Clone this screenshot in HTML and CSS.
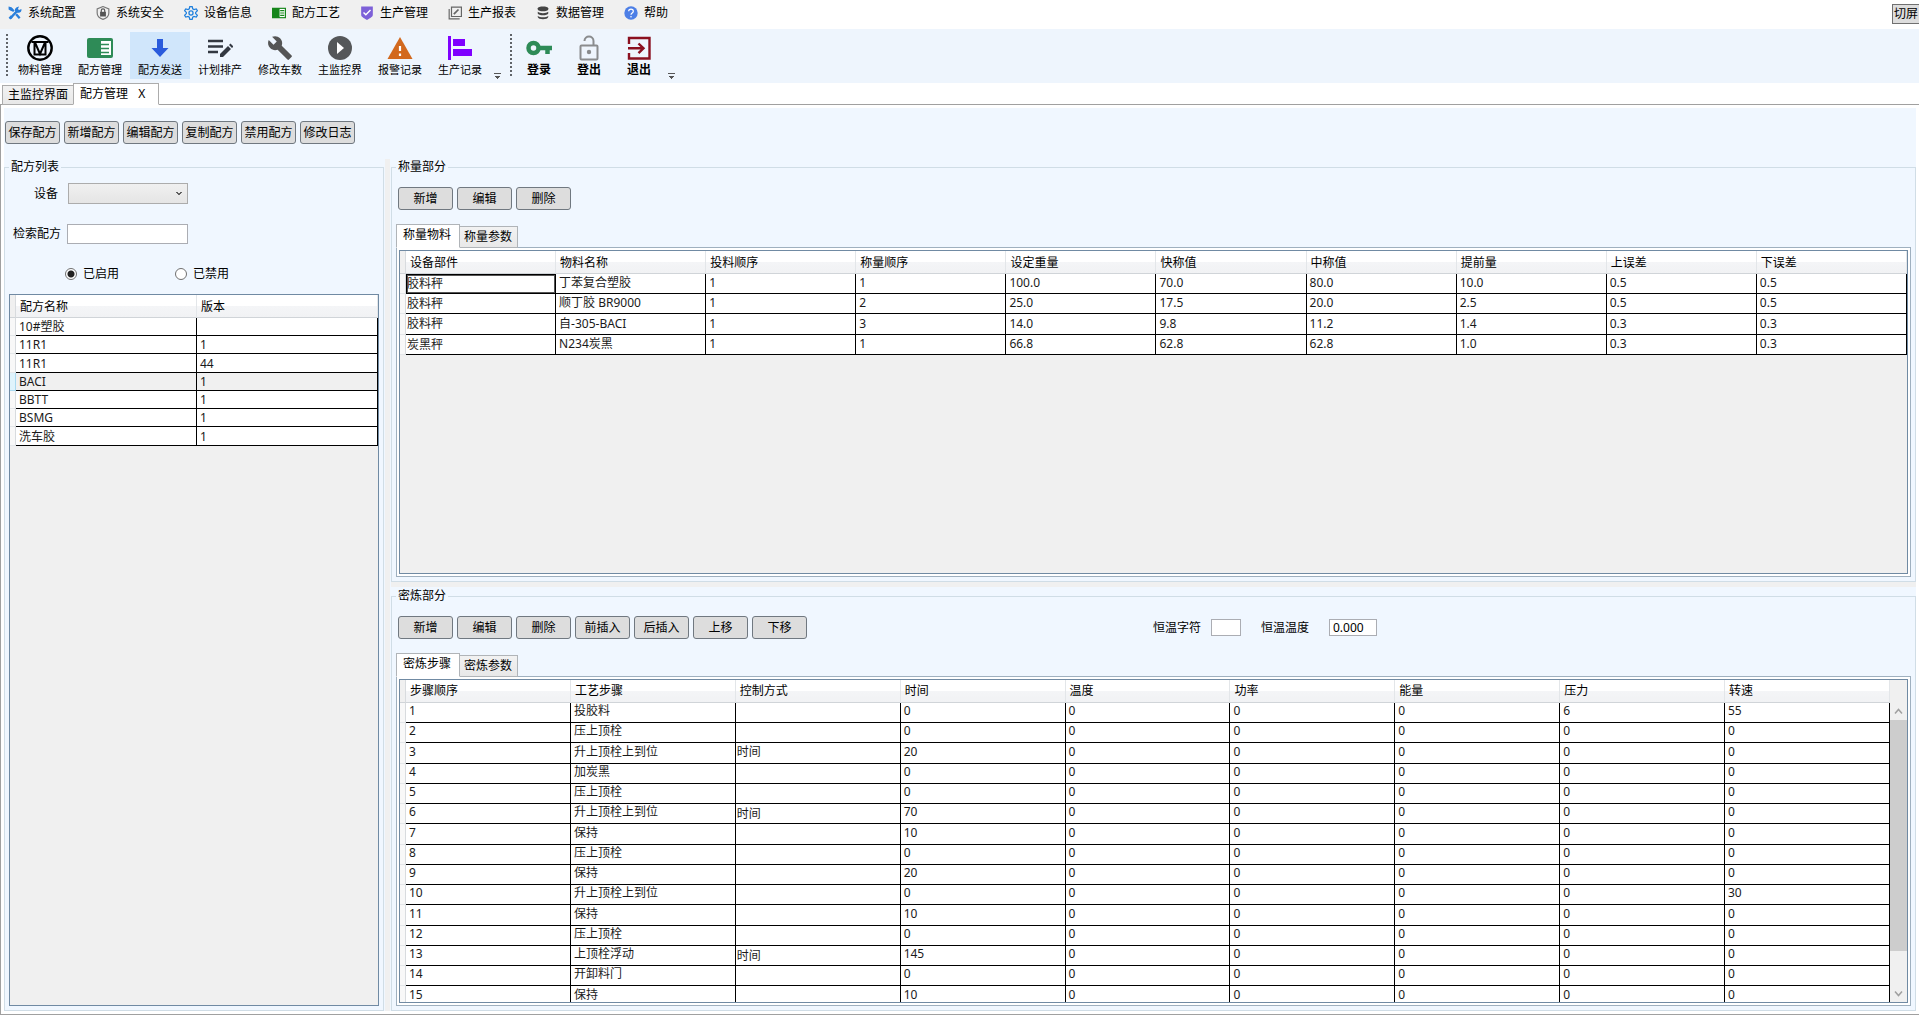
FILE: index.html
```html
<!DOCTYPE html>
<html lang="zh-CN">
<head>
<meta charset="utf-8">
<title>配方管理</title>
<link rel="stylesheet" href="styles.css">
</head>
<body>
<header class="menubar">
  <nav class="menu">
    <a href="#"><svg viewBox="0 0 24 24"><path d="M4 21L17 7M5 4l5 5M14 14l6 7" fill="none" stroke="#2a7fdb" stroke-width="4"/><path d="M1 1l5 1 3 5-3 2-5-3zM15 2l4-1-2 4 2 2 4-2c1 5-3 8-8 6l-3-3c-1-2 1-5 3-6zM1 20l3 3 4-3-3-4z" fill="#2a7fdb"/></svg>系统配置</a>
    <a href="#"><svg viewBox="0 0 24 24"><path d="M12 1L2 5v7c0 5 4 9 10 11 6-2 10-6 10-11V5z" fill="none" stroke="#777" stroke-width="2"/><path d="M7 10h10v8H7z" fill="#555"/><path d="M9 11V8c0-4 6-4 6 0v3" fill="none" stroke="#555" stroke-width="2"/></svg>系统安全</a>
    <a href="#"><svg viewBox="0 0 24 24" fill="none" stroke="#2080dd" stroke-width="2.2"><path d="M10 1h4l1 4 2 1 4-1 2 3-3 3v2l3 3-2 3-4-1-2 1-1 4h-4l-1-4-2-1-4 1-2-3 3-3v-2L1 8l2-3 4 1 2-1z"/><circle cx="12" cy="12" r="3.5"/></svg>设备信息</a>
    <a href="#"><svg viewBox="0 0 24 24"><path d="M0 3h24v18H0z" fill="#16861b"/><path d="M13 5h9v14h-9z" fill="#fff"/><path d="M14 8h7M14 12h7M14 16h7" stroke="#16861b" stroke-width="2"/></svg>配方工艺</a>
    <a href="#"><svg viewBox="0 0 24 24"><path d="M2 1h20v14c0 4-4 5-10 9C6 20 2 19 2 15z" fill="#7d60d8"/><path d="M6 11l4 4 8-8" fill="none" stroke="#fff" stroke-width="2.4"/></svg>生产管理</a>
    <a href="#"><svg viewBox="0 0 24 24" fill="none" stroke="#666" stroke-width="2"><path d="M6 2h17v16H6zM2 5v17h18"/><path d="M10 14l8-8" stroke-width="3"/></svg>生产报表</a>
    <a href="#"><svg viewBox="0 0 24 24" fill="#444"><path d="M3 4c0-4 18-4 18 0v2c0 4-18 4-18 0z"/><path d="M3 10c3 3 15 3 18 0v3c-1 4-17 4-18 0zM3 17c3 3 15 3 18 0v2c-1 5-17 5-18 0z"/></svg>数据管理</a>
    <a href="#"><svg viewBox="0 0 24 24"><circle cx="12" cy="12" r="11.5" fill="#4d7fe6"/><path d="M8 9c0-5 8-5 8 0 0 3-4 3-4 6" fill="none" stroke="#fff" stroke-width="2"/><circle cx="12" cy="18.5" r="1.4" fill="#fff"/></svg>帮助</a>
  </nav>
  <button class="switch-screen">切屏</button>
</header>

<div class="toolbar">
  <span class="grip"></span>
  <div class="tools">
    <button><svg viewBox="0 0 26 26" fill="none" stroke="#000"><circle cx="13" cy="13" r="11.7" stroke-width="2.4"/><path d="M4.500 7h17M7.500 7v12.500h11V7M8 7.500l5 11.500 5-11.500" stroke-width="2"/></svg>物料管理</button>
    <button><svg viewBox="0 0 26 26"><rect y="3" width="26" height="20" rx="2" fill="#2e8b57"/><path d="M14 6h10v14H14z" fill="#fff"/><path d="M14 9.500h8M14 13.500h8M14 17.500h8" stroke="#2e8b57" stroke-width="1.600"/></svg>配方管理</button>
    <button class="active"><svg viewBox="0 0 26 26"><path d="M10 4h6v9h5.500L13 22 4.500 13H10z" fill="#2a5bdc"/></svg>配方发送</button>
    <button><svg viewBox="0 0 26 26"><path d="M1 6h15M1 11.500h15M1 17h10" stroke="#333841" stroke-width="2.400"/><path d="M13 22v-3l8-8 3 3-8 8zM22 10l1.500-1.500 3 3L25 13z" fill="#333841"/></svg>计划排产</button>
    <button><svg viewBox="0 0 24 24"><path d="M22.700 19l-9.100-9.100c.9-2.300.4-5-1.500-6.900-2-2-5-2.400-7.400-1.300L9 6 6 9 1.600 4.700C.4 7.100.9 10.100 2.900 12.100c1.900 1.900 4.600 2.400 6.900 1.500l9.100 9.100c.4.400 1 .4 1.400 0l2.300-2.300c.5-.4.500-1.100.1-1.400z" fill="#555"/></svg>修改车数</button>
    <button><svg viewBox="0 0 26 26"><circle cx="13" cy="13" r="12" fill="#555759"/><path d="M10 7v12l7-6z" fill="#fff"/></svg>主监控界</button>
    <button><svg viewBox="0 0 26 26"><path d="M13 2l12.500 22H.500z" fill="#d2691e"/><path d="M13 11v5M13 18.500v2.500" stroke="#fff" stroke-width="2.200"/></svg>报警记录</button>
    <button><svg viewBox="0 0 26 26" fill="#7f00ff"><path d="M1 1h3v24H1zM6 4h12v7H6zM6 14h19v7H6z"/></svg>生产记录</button>
  </div>
  <span class="overflow"></span>
  <span class="grip"></span>
  <div class="tools account">
    <button><svg viewBox="0 0 26 26" fill="none" stroke="#2e8b57"><circle cx="7.500" cy="13" r="5" stroke-width="4.500"/><path d="M13 13h13M21.500 13v6" stroke-width="4.500"/></svg>登录</button>
    <button><svg viewBox="0 0 26 26" fill="none" stroke="#8a8c8e" stroke-width="2"><rect x="4.500" y="10.500" width="17" height="14" rx="1"/><path d="M8.500 6c0-6 9-6 9 0v4.500"/><circle cx="13" cy="17" r="1.200" fill="#666"/></svg>登出</button>
    <button><svg viewBox="0 0 26 26" fill="none" stroke="#8b1020" stroke-width="2.400"><path d="M3 9V3h20.500v20.500H3V18M2 13.300h15M12.500 8.500l5 4.800-5 4.800"/></svg>退出</button>
  </div>
  <span class="overflow"></span>
</div>

<div class="page-tabs">
  <button>主监控界面</button>
  <button class="active">配方管理 <span class="close">X</span></button>
</div>

<main class="page">
  <div class="surface">
    <div class="actions">
      <button>保存配方</button><button>新增配方</button><button>编辑配方</button><button>复制配方</button><button>禁用配方</button><button>修改日志</button>
    </div>
    <div class="workspace">
      <fieldset class="group">
        <legend>配方列表</legend>
        <div class="field field-device"><label for="device">设备</label><select id="device"><option></option></select></div>
        <div class="field field-search"><label for="search">检索配方</label><input id="search" type="text"></div>
        <div class="radios">
          <label><input type="radio" name="state" checked>已启用</label>
          <label><input type="radio" name="state">已禁用</label>
        </div>
        <div class="grid recipes">
          <table>
            <thead><tr><th class="mark"></th><th>配方名称</th><th>版本</th></tr></thead>
            <tbody>
              <tr><td class="mark"></td><td>10#塑胶</td><td></td></tr>
              <tr><td class="mark"></td><td>11R1</td><td>1</td></tr>
              <tr><td class="mark"></td><td>11R1</td><td>44</td></tr>
              <tr class="selected"><td class="mark"></td><td>BACI</td><td>1</td></tr>
              <tr><td class="mark"></td><td>BBTT</td><td>1</td></tr>
              <tr><td class="mark"></td><td>BSMG</td><td>1</td></tr>
              <tr><td class="mark"></td><td>洗车胶</td><td>1</td></tr>
            </tbody>
          </table>
        </div>
      </fieldset>
      <div class="splitter-v"></div>
      <div class="details">
        <fieldset class="group">
          <legend>称量部分</legend>
          <div class="row-actions"><button>新增</button><button>编辑</button><button>删除</button></div>
          <div class="sub-tabs"><button class="active">称量物料</button><button>称量参数</button></div>
          <div class="tab-panel">
            <div class="grid">
              <table>
                <thead><tr><th class="mark"></th><th>设备部件</th><th>物料名称</th><th>投料顺序</th><th>称量顺序</th><th>设定重量</th><th>快称值</th><th>中称值</th><th>提前量</th><th>上误差</th><th>下误差</th></tr></thead>
                <tbody>
                  <tr><td class="mark"></td><td class="choice focused">胶料秤</td><td>丁苯复合塑胶</td><td>1</td><td>1</td><td>100.0</td><td>70.0</td><td>80.0</td><td>10.0</td><td>0.5</td><td>0.5</td></tr>
                  <tr><td class="mark"></td><td class="choice">胶料秤</td><td>顺丁胶 BR9000</td><td>1</td><td>2</td><td>25.0</td><td>17.5</td><td>20.0</td><td>2.5</td><td>0.5</td><td>0.5</td></tr>
                  <tr><td class="mark"></td><td class="choice">胶料秤</td><td>自-305-BACI</td><td>1</td><td>3</td><td>14.0</td><td>9.8</td><td>11.2</td><td>1.4</td><td>0.3</td><td>0.3</td></tr>
                  <tr><td class="mark"></td><td class="choice">炭黑秤</td><td>N234炭黑</td><td>1</td><td>1</td><td>66.8</td><td>62.8</td><td>62.8</td><td>1.0</td><td>0.3</td><td>0.3</td></tr>
                </tbody>
              </table>
            </div>
          </div>
        </fieldset>
        <div class="splitter-h"></div>
        <fieldset class="group">
          <legend>密炼部分</legend>
          <div class="row-actions">
            <button>新增</button><button>编辑</button><button>删除</button><button>前插入</button><button>后插入</button><button>上移</button><button>下移</button>
            <div class="thermo">
              <label for="tchar">恒温字符</label><input id="tchar" class="t-char" type="text">
              <label for="ttemp">恒温温度</label><input id="ttemp" class="t-temp" type="text" value="0.000">
            </div>
          </div>
          <div class="sub-tabs"><button class="active">密炼步骤</button><button>密炼参数</button></div>
          <div class="tab-panel">
            <div class="grid scrolling">
              <table>
                <thead><tr><th class="mark"></th><th>步骤顺序</th><th>工艺步骤</th><th>控制方式</th><th>时间</th><th>温度</th><th>功率</th><th>能量</th><th>压力</th><th>转速</th></tr></thead>
                <tbody>
                  <tr><td class="mark"></td><td>1</td><td>投胶料</td><td class="choice"></td><td>0</td><td>0</td><td>0</td><td>0</td><td>6</td><td>55</td></tr>
                  <tr><td class="mark"></td><td>2</td><td>压上顶栓</td><td class="choice"></td><td>0</td><td>0</td><td>0</td><td>0</td><td>0</td><td>0</td></tr>
                  <tr><td class="mark"></td><td>3</td><td>升上顶栓上到位</td><td class="choice">时间</td><td>20</td><td>0</td><td>0</td><td>0</td><td>0</td><td>0</td></tr>
                  <tr><td class="mark"></td><td>4</td><td>加炭黑</td><td class="choice"></td><td>0</td><td>0</td><td>0</td><td>0</td><td>0</td><td>0</td></tr>
                  <tr><td class="mark"></td><td>5</td><td>压上顶栓</td><td class="choice"></td><td>0</td><td>0</td><td>0</td><td>0</td><td>0</td><td>0</td></tr>
                  <tr><td class="mark"></td><td>6</td><td>升上顶栓上到位</td><td class="choice">时间</td><td>70</td><td>0</td><td>0</td><td>0</td><td>0</td><td>0</td></tr>
                  <tr><td class="mark"></td><td>7</td><td>保持</td><td class="choice"></td><td>10</td><td>0</td><td>0</td><td>0</td><td>0</td><td>0</td></tr>
                  <tr><td class="mark"></td><td>8</td><td>压上顶栓</td><td class="choice"></td><td>0</td><td>0</td><td>0</td><td>0</td><td>0</td><td>0</td></tr>
                  <tr><td class="mark"></td><td>9</td><td>保持</td><td class="choice"></td><td>20</td><td>0</td><td>0</td><td>0</td><td>0</td><td>0</td></tr>
                  <tr><td class="mark"></td><td>10</td><td>升上顶栓上到位</td><td class="choice"></td><td>0</td><td>0</td><td>0</td><td>0</td><td>0</td><td>30</td></tr>
                  <tr><td class="mark"></td><td>11</td><td>保持</td><td class="choice"></td><td>10</td><td>0</td><td>0</td><td>0</td><td>0</td><td>0</td></tr>
                  <tr><td class="mark"></td><td>12</td><td>压上顶栓</td><td class="choice"></td><td>0</td><td>0</td><td>0</td><td>0</td><td>0</td><td>0</td></tr>
                  <tr><td class="mark"></td><td>13</td><td>上顶栓浮动</td><td class="choice">时间</td><td>145</td><td>0</td><td>0</td><td>0</td><td>0</td><td>0</td></tr>
                  <tr><td class="mark"></td><td>14</td><td>开卸料门</td><td class="choice"></td><td>0</td><td>0</td><td>0</td><td>0</td><td>0</td><td>0</td></tr>
                  <tr><td class="mark"></td><td>15</td><td>保持</td><td class="choice"></td><td>10</td><td>0</td><td>0</td><td>0</td><td>0</td><td>0</td></tr>
                </tbody>
              </table>
              <div class="scrollbar">
                <svg viewBox="0 0 17 17"><path d="M5 10.500L8.500 6.500l3.500 4" fill="none" stroke="#a0a0a0" stroke-width="1.500"/></svg>
                <div class="track"><div class="thumb"></div></div>
                <svg viewBox="0 0 17 17"><path d="M5 6.500l3.500 4 3.500-4" fill="none" stroke="#a0a0a0" stroke-width="1.500"/></svg>
              </div>
            </div>
          </div>
        </fieldset>
      </div>
    </div>
  </div>
</main>
</body>
</html>
```
FILE: styles.css
```css
* { box-sizing: border-box; }

body {
  margin: 0;
  height: 100vh;
  padding-bottom: 1px;
  display: flex;
  flex-direction: column;
  background: #fff;
  color: #000;
  font: 12px/16px "Noto Sans", "Noto Sans CJK SC", sans-serif;
}

button, input, select { font: inherit; color: inherit; margin: 0; }
button { padding: 0; border: 0; background: none; white-space: nowrap; }

/* Menu bar */
.menubar { flex: none; display: flex; justify-content: space-between; height: 29px; }
.menu { display: flex; background: #f0f0f0; }
.menu a {
  display: flex;
  align-items: center;
  gap: 6px;
  padding: 0 12px 4px 8px;
  color: inherit;
  text-decoration: none;
  white-space: nowrap;
}
.menu svg { width: 14px; height: 14px; }
.switch-screen {
  align-self: flex-start;
  width: 27px;
  height: 20px;
  margin-top: 4px;
  border: 1px solid #707070;
  border-right: 0;
  background: #ddd;
}

/* Toolbar */
.toolbar { flex: none; display: flex; height: 54px; padding: 3px 0 4px 6px; background: #eef5fd; }
.grip {
  width: 2px;
  margin: 2px 2px 2px 0;
  background: repeating-linear-gradient(#606468 0 2px, transparent 2px 4px);
}
.tools { display: flex; }
.tools button {
  width: 60px;
  display: flex;
  flex-direction: column;
  align-items: center;
  gap: 1px;
  padding-top: 3px;
  font-size: 11px;
}
.tools button.active { background: #d0e6fb; }
.tools svg { width: 26px; height: 26px; }
.account button { width: 50px; font-size: 12px; font-weight: 700; }
.overflow {
  align-self: flex-end;
  width: 7px;
  height: 6px;
  margin: 0 9px 0 4px;
  border-top: 1px solid #555;
  background:
    linear-gradient(#555, #555) 1px 2px / 5px 1px no-repeat,
    linear-gradient(#555, #555) 2px 3px / 3px 1px no-repeat,
    linear-gradient(#555, #555) 3px 4px / 1px 1px no-repeat;
}

/* Document tabs */
.page-tabs { flex: none; display: flex; align-items: flex-end; height: 22px; padding-left: 2px; margin-bottom: -1px; z-index: 1; }
.page-tabs button {
  height: 20px;
  padding: 0 5px;
  border: 1px solid #acacac;
  border-right: 0;
  background: linear-gradient(#f2f2f2, #e8e8e8);
}
.page-tabs button.active {
  height: 22px;
  padding: 0 13px 0 6px;
  border-right: 1px solid #acacac;
  border-bottom-color: #fff;
  background: #fff;
}
.close { margin-left: 7px; }

.page {
  flex: 1;
  min-height: 0;
  display: flex;
  padding: 3px;
  border: 1px solid #a0a0a0;
  border-right: 0;
}
.surface { flex: 1; min-width: 0; display: flex; flex-direction: column; background: #f0f7ff; }

.actions { display: flex; gap: 4px; padding: 13px 0 15px 1px; }
.actions button, .row-actions button {
  width: 55px;
  height: 23px;
  border: 1px solid #707880;
  border-radius: 3px;
  background: #ddd;
}

.workspace { flex: 1; min-height: 0; display: flex; }
.splitter-v { width: 5px; margin: 0 1px; background: #f0f0f0; }
.splitter-h { height: 5px; margin-bottom: 1px; background: #f0f0f0; }
.details { flex: 1; min-width: 0; display: grid; grid-template-rows: minmax(0, 1fr) auto minmax(0, 1fr); }

.group {
  min-width: 0;
  margin: 0;
  padding: 0 4px 4px;
  border: 1px solid #d0dde6;
  display: flex;
  flex-direction: column;
}
.workspace > .group { flex: none; width: 380px; }
.group legend { padding: 0 2px; }

/* Recipe filter */
.field { display: flex; align-items: center; }
.field label { width: 58px; }
.field-device { margin-top: 8px; }
.field-device label { width: 59px; padding-left: 25px; }
.field-device select {
  width: 120px;
  height: 21px;
  border: 1px solid #acacac;
  border-radius: 0;
  appearance: none;
  background:
    linear-gradient(45deg, transparent 50%, #606060 50% 75%, transparent 75%) 107px 8px / 3px 4px no-repeat,
    linear-gradient(-45deg, transparent 50%, #606060 50% 75%, transparent 75%) 110px 8px / 3px 4px no-repeat,
    linear-gradient(#f0f0f0, #e5e5e5);
}
.field-search { margin-top: 20px; }
.field-search label { padding-left: 4px; }
.field-search input { width: 121px; height: 20px; }
input[type="text"] { padding: 0 3px; border: 1px solid #abadb3; background: #fff; }
.radios { display: flex; gap: 56px; margin: 21px 0 11px 56px; height: 18px; }
.radios label { display: flex; align-items: center; gap: 6px; width: 54px; white-space: nowrap; }
.radios input {
  flex: none;
  appearance: none;
  width: 12px;
  height: 12px;
  border: 1px solid #707070;
  border-radius: 50%;
  background: #fff;
}
.radios input:checked { background: radial-gradient(#212121 3px, #fff 4px); }

/* Item editors */
.row-actions { display: flex; gap: 4px; margin: 12px 0 14px 2px; }
.thermo { flex: 1; display: flex; align-items: center; justify-content: flex-end; padding-right: 534px; }
.t-char { width: 30px; height: 17px; margin: 0 20px 0 10px; }
.t-temp { width: 48px; height: 17px; margin-left: 20px; }

.sub-tabs { display: flex; align-items: flex-end; margin-bottom: -1px; z-index: 1; }
.sub-tabs button {
  height: 22px;
  padding: 0 5px 0 4px;
  border: 1px solid #b0b4b8;
  border-left: 0;
  background: linear-gradient(#f2f2f2, #e8e8e8);
}
.sub-tabs button.active {
  height: 24px;
  padding: 0 8px 2px 6px;
  border-left: 1px solid #b0b4b8;
  border-bottom-color: #fff;
  background: #fff;
}
.tab-panel { flex: 1; min-height: 0; display: flex; padding: 2px; border: 1px solid #9fb0bf; background: #fff; }

/* Data grids */
.grid {
  flex: 1;
  min-width: 0;
  min-height: 0;
  display: flex;
  align-items: flex-start;
  overflow: hidden;
  border: 1px solid #708aa3;
  background: #f0f0f0;
}
.grid table { flex: 1; width: 100%; table-layout: fixed; border-spacing: 0; }
.grid th {
  height: 23px;
  padding: 2px 4px 0;
  border-right: 1px solid #e3e6e9;
  border-bottom: 1px solid #d0d4d8;
  background: linear-gradient(#fff 50%, #f4f5f7 50%, #f1f2f4);
  font-weight: 400;
  text-align: left;
}
.grid td {
  padding: 1px 3px 0;
  height: 20px;
  line-height: 16px;
  border-right: 1px solid #000;
  border-bottom: 1px solid #000;
  background: #fff;
  color: #1a1a1a;
  vertical-align: top;
  white-space: nowrap;
}
.grid tr:nth-child(4n+3) td { height: 21px; padding-top: 2px; }
.grid .mark { width: 6px; padding: 0; border-right-color: #d8dbde; }
.grid td.mark { border-bottom-color: #e3e6e9; background: #f8f8f8; }
.grid th.mark { background: #f0f0f0; }
.grid td.choice { padding-left: 1px; padding-top: 2px; }
.grid td.focused { padding: 1px 0 0; border: 1px solid #000; box-shadow: inset 0 0 0 1px #555; }

.recipes td { height: 18px; }
.recipes tr:nth-child(4n+3) td { height: 19px; }
.recipes .selected td { background: #f0f0f0; }
.recipes .selected td.mark { background: #dff3fc; border-color: #a9d9f0; }

.scrolling { align-items: stretch; }
.scrolling table { align-self: flex-start; }
.scrolling th { padding-top: 0; }
.scrolling td { padding-top: 0; }
.scrolling tr:nth-child(4n+3) td { padding-top: 1px; }
.scrollbar { flex: none; width: 17px; padding-top: 23px; display: flex; flex-direction: column; background: #f0f0f0; }
.scrollbar svg { flex: none; width: 17px; height: 17px; }
.track { flex: 1; }
.thumb { height: 87%; background: #cdcdcd; }
```
